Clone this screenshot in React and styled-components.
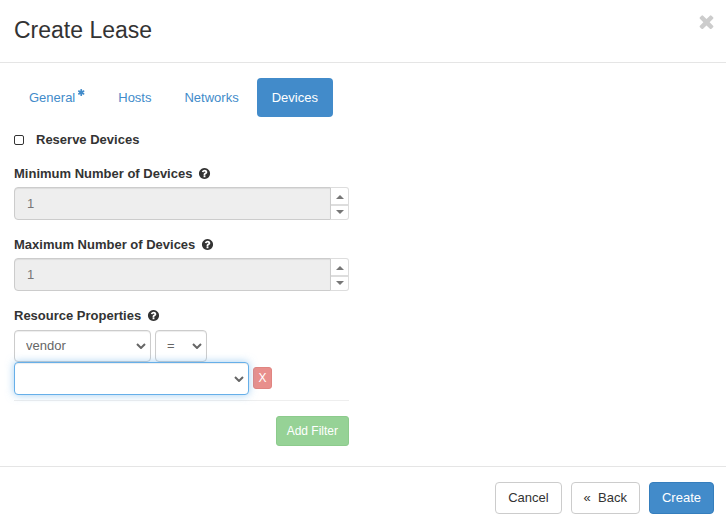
import React from "react";
import styled, { createGlobalStyle, css } from "styled-components";

const GlobalStyle = createGlobalStyle`
  *, *::before, *::after { box-sizing: border-box; }
  body {
    margin: 0;
    background: #fff;
    color: #333;
    font: 13px/18px "Liberation Sans", Arial, sans-serif;
  }
  button, input, select { font: inherit; color: inherit; margin: 0; }
`;

const Header = styled.header`
  display: flex;
  justify-content: space-between;
  align-items: flex-start;
  padding: 14px 12px 16px 14px;
  border-bottom: 1px solid #e5e5e5;
`;

const Title = styled.h1`
  margin: 0;
  font-size: 23px;
  font-weight: 400;
  line-height: 32px;
`;

const CloseButton = styled.button`
  display: flex;
  padding: 0;
  border: 0;
  background: none;
  color: #ccc;
  cursor: pointer;
`;

const Glyph = styled.svg`
  display: block;
  flex: none;
  width: ${(p) => p.$size}px;
  height: ${(p) => p.$size}px;
  fill: currentColor;
`;

const Body = styled.main`
  padding: 15px 14px 20px;
`;

const Tabs = styled.nav`
  display: flex;
  gap: 3px;
`;

const Tab = styled.a`
  display: flex;
  gap: 3px;
  padding: 11px 15px 10px;
  border-radius: 4px;
  color: #428bca;
  text-decoration: none;
  ${(p) =>
    p.$active &&
    css`
      background: #428bca;
      color: #fff;
    `}
`;

const Columns = styled.form`
  display: grid;
  grid-template-columns: 1fr 1fr;
  gap: 28px;
  padding-top: 14px;
`;

const Fields = styled.div`
  display: flex;
  flex-direction: column;
  gap: 15px;
`;

const CheckLabel = styled.label`
  display: flex;
  align-items: center;
  gap: 12px;
  font-weight: 700;
`;

const Checkbox = styled.input`
  appearance: none;
  width: 10px;
  height: 10px;
  border: 1px solid #333;
  border-radius: 2px;
  background: #fff;
  &:checked { background: #428bca; }
`;

const Field = styled.div`
  display: flex;
  flex-direction: column;
  gap: 4px;
`;

const Label = styled.label`
  display: flex;
  align-items: flex-start;
  gap: 6px;
  padding-top: 1px;
  font-weight: 700;
  ${Glyph} { margin-top: 2px; }
`;

const Spinner = styled.div`
  display: flex;
  height: 33px;
`;

const NumberInput = styled.input`
  flex: 1;
  min-width: 0;
  padding: 6px 12px;
  border: 1px solid #ccc;
  border-radius: 4px 0 0 4px;
  background: #eee;
  box-shadow: inset 0 1px 1px rgba(0, 0, 0, 0.075);
  color: #777;
`;

const Steps = styled.div`
  display: flex;
  flex-direction: column;
  width: 18px;
`;

const Step = styled.button`
  display: flex;
  flex: 1;
  align-items: center;
  justify-content: center;
  padding: 0;
  border: 1px solid #ddd;
  border-left: 0;
  background: #fff;
  color: #777;
  &:first-child { padding-top: 2px; border-radius: 0 3px 0 0; }
  &:last-child { border-radius: 0 0 3px 0; }
`;

const Triangle = styled.svg`
  width: 8px;
  height: 4px;
  fill: currentColor;
`;

const Filter = styled.div`
  padding: 1px 0 5px;
  border-bottom: 1px solid #eee;
`;

const FilterRow = styled.div`
  display: flex;
  align-items: flex-start;
  gap: 4px;
`;

const SelectBox = styled.div`
  position: relative;
  width: ${(p) => p.$width};
`;

const Select = styled.select`
  display: block;
  appearance: none;
  width: 100%;
  height: ${(p) => (p.$focused ? 33 : 32)}px;
  padding: 0 24px 0 11px;
  border: 1px solid ${(p) => (p.$focused ? "#66afe9" : "#ccc")};
  border-radius: 4px;
  background: #fff;
  box-shadow: inset 0 1px 1px rgba(0, 0, 0, 0.075)
    ${(p) => p.$focused && ", 0 0 8px rgba(102, 175, 233, 0.6)"};
  color: #666;
  outline: 0;
`;

const Chevron = styled.svg`
  position: absolute;
  top: 50%;
  right: 5px;
  width: 10px;
  height: 6px;
  margin-top: -3px;
  fill: none;
  stroke: #666;
  stroke-width: 2;
  pointer-events: none;
`;

const RemoveButton = styled.button`
  width: 19px;
  height: 22px;
  margin-top: 5px;
  padding: 0;
  border: 1px solid #e08581;
  border-radius: 3px;
  background: #e88f8c;
  color: #fff;
  font-size: 12px;
  line-height: 18px;
`;

const AddButton = styled.button`
  align-self: flex-end;
  height: 30px;
  padding: 0 10px;
  border: 1px solid #8ccb8c;
  border-radius: 3px;
  background: #96d296;
  color: #fff;
  font-size: 12px;
`;

const Footer = styled.footer`
  display: flex;
  justify-content: flex-end;
  gap: 9px;
  padding: 15px 12px 9px;
  border-top: 1px solid #e5e5e5;
`;

const Button = styled.button`
  height: 32px;
  padding: 0 12px;
  border: 1px solid ${(p) => (p.$primary ? "#357ebd" : "#ccc")};
  border-radius: 4px;
  background: ${(p) => (p.$primary ? "#428bca" : "#fff")};
  color: ${(p) => (p.$primary ? "#fff" : "#333")};
  white-space: pre;
  cursor: pointer;
`;

const PATHS = {
  close:
    "M1490 1322q0 40-28 68l-136 136q-28 28-68 28t-68-28l-294-294-294 294q-28 28-68 28t-68-28l-136-136q-28-28-28-68t28-68l294-294-294-294q-28-28-28-68t28-68l136-136q28-28 68-28t68 28l294 294 294-294q28-28 68-28t68 28l136 136q28 28 28 68t-28 68l-294 294 294 294q28 28 28 68z",
  help:
    "M1024 1376v-192q0-14-9-23t-23-9h-192q-14 0-23 9t-9 23v192q0 14 9 23t23 9h192q14 0 23-9t9-23zm256-672q0-88-55.5-163t-138.5-116-170.5-41q-243 0-371 213-15 24 8 42l132 100q7 6 19 6 16 0 25-12 53-68 86-92 34-24 86-24 48 0 85.5 26t37.5 59q0 38-20 61t-68 45q-63 28-115.5 86.5t-52.5 125.500v36q0 14 9 23t23 9h192q14 0 23-9t9-23q0-19 21.5-49.500t54.5-49.500q32-18 49-28.500t46-35 44.500-48 28-60.500 12.500-81zm384 192q0 209-103 385.500t-279.500 279.500-385.500 103-385.500-103-279.500-279.500-103-385.500 103-385.500 279.500-279.500 385.500-103 385.500 103 279.500 279.500 103 385.500z",
  asterisk:
    "M1482 1050q46 26 59.5 77.500t-12.500 97.500l-64 110q-26 46-77.500 59.500t-97.500-12.500l-266-153v307q0 52-38 90t-90 38h-128q-52 0-90-38t-38-90v-307l-266 153q-46 26-97.500 12.500t-77.500-59.500l-64-110q-26-46-12.500-97.500t59.500-77.500l266-154-266-154q-46-26-59.500-77.500t12.500-97.500l64-110q26-46 77.500-59.500t97.500 12.500l266 153v-307q0-52 38-90t90-38h128q52 0 90 38t38 90v307l266-153q46-26 97.500-12.500t77.500 59.500l64 110q26 46 12.500 97.500t-59.500 77.500l-266 154z",
};

function Icon({ name, size, viewBox = "0 0 1792 1792" }) {
  return (
    <Glyph $size={size} viewBox={viewBox} aria-hidden="true">
      <path d={PATHS[name]} />
    </Glyph>
  );
}

function NumberField({ id, label }) {
  return (
    <Field>
      <Label htmlFor={id}>
        {label}
        <Icon name="help" size={13} />
      </Label>
      <Spinner>
        <NumberInput id={id} type="text" inputMode="numeric" defaultValue="1" disabled />
        <Steps>
          <Step type="button" aria-label={`Increase ${label}`}>
            <Triangle viewBox="0 0 8 4"><path d="M0 4L4 0L8 4Z" /></Triangle>
          </Step>
          <Step type="button" aria-label={`Decrease ${label}`}>
            <Triangle viewBox="0 0 8 4"><path d="M0 0L4 4L8 0Z" /></Triangle>
          </Step>
        </Steps>
      </Spinner>
    </Field>
  );
}

function Dropdown({ id, label, options, width, focused }) {
  return (
    <SelectBox $width={width}>
      <Select id={id} aria-label={label} $focused={focused}>
        {options.map((o) => <option key={o}>{o}</option>)}
      </Select>
      <Chevron viewBox="0 0 10 6"><path d="M1 1L5 5L9 1" /></Chevron>
    </SelectBox>
  );
}

export default function App() {
  return (
    <>
      <GlobalStyle />
      <Header>
        <Title>Create Lease</Title>
        <CloseButton type="button" aria-label="Close">
          <Icon name="close" size={15} viewBox="250 250 1292 1292" />
        </CloseButton>
      </Header>
      <Body>
        <Tabs>
          <Tab href="#general">General <Icon name="asterisk" size={7} viewBox="190 128 1412 1536" /></Tab>
          <Tab href="#hosts">Hosts</Tab>
          <Tab href="#networks">Networks</Tab>
          <Tab href="#devices" $active aria-current="page">Devices</Tab>
        </Tabs>
        <Columns>
          <Fields>
            <CheckLabel>
              <Checkbox type="checkbox" />
              Reserve Devices
            </CheckLabel>
            <NumberField id="min-devices" label="Minimum Number of Devices" />
            <NumberField id="max-devices" label="Maximum Number of Devices" />
            <Field>
              <Label htmlFor="property">
                Resource Properties
                <Icon name="help" size={13} />
              </Label>
              <Filter>
                <FilterRow>
                  <Dropdown id="property" label="Resource Properties" options={["vendor"]} width="137px" />
                  <Dropdown label="Operator" options={["="]} width="52px" />
                </FilterRow>
                <FilterRow>
                  <Dropdown label="Value" options={[""]} width="235px" focused />
                  <RemoveButton type="button">X</RemoveButton>
                </FilterRow>
              </Filter>
            </Field>
            <AddButton type="button">Add Filter</AddButton>
          </Fields>
        </Columns>
      </Body>
      <Footer>
        <Button type="button">Cancel</Button>
        <Button type="button">{"«  Back"}</Button>
        <Button type="button" $primary>Create</Button>
      </Footer>
    </>
  );
}
